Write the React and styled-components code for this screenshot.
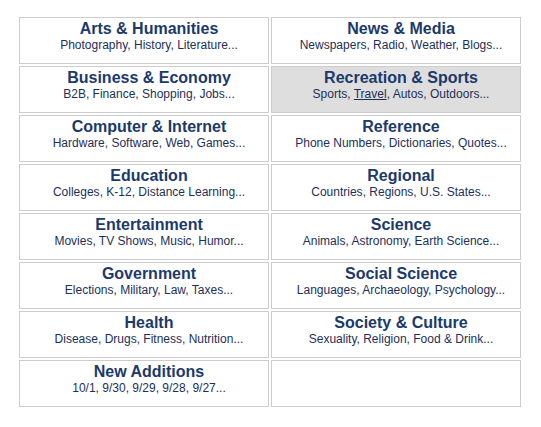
import React from "react";
import styled, { createGlobalStyle } from "styled-components";

const Global = createGlobalStyle`
  html, body { margin: 0; padding: 0; background: #ffffff; }
  body { font-family: "Liberation Sans", Arial, sans-serif; }
`;

const Page = styled.div`
  padding: 17px 0 0 19px;
`;

const Grid = styled.div`
  display: grid;
  grid-template-columns: 250px 250px;
  grid-auto-rows: 47px;
  column-gap: 2px;
  row-gap: 2px;
`;

const Cell = styled.div`
  box-sizing: border-box;
  border: 1px solid #cccccc;
  background: ${(p) => (p.$active ? "#dedede" : "#ffffff")};
  padding: 2px 0 0 10px;
  text-align: center;
`;

const Title = styled.a`
  display: block;
  font-size: 16px;
  line-height: 18px;
  font-weight: bold;
  color: #1b3a6b;
  text-decoration: none;
`;

const Sub = styled.div`
  font-size: 12px;
  line-height: 14px;
  color: #1d2f57;
`;

const SubLink = styled.a`
  color: inherit;
  text-decoration: ${(p) => (p.$hover ? "underline" : "none")};
`;

const cats = [
  ["Arts & Humanities", ["Photography", "History", "Literature"]],
  ["News & Media", ["Newspapers", "Radio", "Weather", "Blogs"]],
  ["Business & Economy", ["B2B", "Finance", "Shopping", "Jobs"]],
  ["Recreation & Sports", ["Sports", "Travel", "Autos", "Outdoors"], true, "Travel"],
  ["Computer & Internet", ["Hardware", "Software", "Web", "Games"]],
  ["Reference", ["Phone Numbers", "Dictionaries", "Quotes"]],
  ["Education", ["Colleges", "K-12", "Distance Learning"]],
  ["Regional", ["Countries", "Regions", "U.S. States"]],
  ["Entertainment", ["Movies", "TV Shows", "Music", "Humor"]],
  ["Science", ["Animals", "Astronomy", "Earth Science"]],
  ["Government", ["Elections", "Military", "Law", "Taxes"]],
  ["Social Science", ["Languages", "Archaeology", "Psychology"]],
  ["Health", ["Disease", "Drugs", "Fitness", "Nutrition"]],
  ["Society & Culture", ["Sexuality", "Religion", "Food & Drink"]],
  ["New Additions", ["10/1", "9/30", "9/29", "9/28", "9/27"]],
];

export default function App() {
  return (
    <>
      <Global />
      <Page>
        <Grid>
          {cats.map(([title, subs, active, hov]) => (
            <Cell key={title} $active={active}>
              <Title href="#">{title}</Title>
              <Sub>
                {subs.map((s, i) => (
                  <React.Fragment key={s}>
                    <SubLink href="#" $hover={s === hov}>{s}</SubLink>
                    {i < subs.length - 1 ? ", " : "..."}
                  </React.Fragment>
                ))}
              </Sub>
            </Cell>
          ))}
          <Cell />
        </Grid>
      </Page>
    </>
  );
}
